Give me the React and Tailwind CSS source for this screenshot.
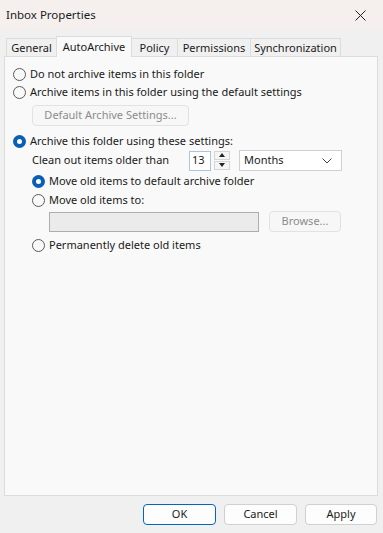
import React from "react";

function Radio({ checked, label, className = "" }) {
  return (
    <div className={"flex items-center h-[18px] " + className}>
      {checked ? (
        <span className="w-[13px] h-[13px] rounded-full bg-[#0a5fb4] flex items-center justify-center">
          <span className="w-[5px] h-[5px] rounded-full bg-white" />
        </span>
      ) : (
        <span className="w-[13px] h-[13px] rounded-full border border-[#5a5a5a] bg-[#f9f9f9]" />
      )}
      <span className="ml-[4px] text-[11px] text-[#1a1a1a]">{label}</span>
    </div>
  );
}

function Button({ children, className = "", disabled, primary }) {
  return (
    <div
      className={
        "h-[21px] flex items-center justify-center rounded-[4px] border text-[11px] " +
        (disabled
          ? "border-[#e2e2e2] bg-[#f7f7f7] text-[#8c8c8c] "
          : primary
          ? "border-[#0067c0] bg-[#fdfdfd] text-[#1a1a1a] "
          : "border-[#d0d0d0] bg-[#fdfdfd] text-[#1a1a1a] ") +
        className
      }
    >
      {children}
    </div>
  );
}

export default function App() {
  const tabs = [
    { name: "General", w: "w-[51px]" },
    { name: "AutoArchive", w: "w-[76px]", active: true },
    { name: "Policy", w: "w-[47px]" },
    { name: "Permissions", w: "w-[74px]" },
    { name: "Synchronization", w: "w-[91px]" },
  ];
  return (
    <div className="w-[383px] h-[533px] bg-[#f0f0f0] flex flex-col font-['Noto_Sans','Open_Sans',sans-serif] text-[11px] overflow-hidden">
      <div className="h-[30px] bg-[#f5efed] flex items-center justify-between pl-[6px] pr-[17px]">
        <span className="text-[11.5px] text-[#1a1a1a]">Inbox Properties</span>
        <svg width="11" height="11" viewBox="0 0 11 11">
          <path d="M0.5 0.5 L10.5 10.5 M10.5 0.5 L0.5 10.5" stroke="#222" strokeWidth="1" />
        </svg>
      </div>
      <div className="pt-[6px] px-[4px] flex flex-col">
        <div className="flex items-end pl-[2px] h-[20px]">
          {tabs.map((t) =>
            t.active ? (
              <div
                key={t.name}
                className={t.w + " h-[21px] -mb-[1px] -ml-[1px] z-10 bg-[#f9f9f9] border border-b-0 border-[#dcdcdc] flex items-start justify-center pt-[2px] text-[11px] text-[#1a1a1a]"}
              >
                {t.name}
              </div>
            ) : (
              <div
                key={t.name}
                className={t.w + " h-[18px] bg-[#f0f0f0] border border-b-0 border-[#dcdcdc] -ml-[1px] first:ml-0 flex items-center justify-center pt-[2px] text-[11px] text-[#1a1a1a]"}
              >
                {t.name}
              </div>
            )
          )}
        </div>
        <div className="w-[374px] h-[440px] bg-[#f9f9f9] border border-[#dcdcdc] pl-[8px] pt-[8px]">
          <Radio label="Do not archive items in this folder" />
          <Radio label="Archive items in this folder using the default settings" />
          <Button disabled className="w-[157px] ml-[19px] mt-[4px]">
            Default Archive Settings...
          </Button>
          <Radio checked label="Archive this folder using these settings:" className="mt-[6px]" />
          <div className="flex items-center h-[21px] ml-[19px]">
            <span className="w-[157px] text-[11px] text-[#1a1a1a]">Clean out items older than</span>
            <div className="w-[22px] h-[20px] border border-[#a9c4e6] bg-white flex items-center pl-[2px] text-[11px] text-[#1a1a1a]">
              13
            </div>
            <div className="ml-[3px] w-[16px] h-[20px] flex flex-col gap-[1px]">
              <div className="h-[9px] border border-[#d5d5d5] bg-[#f5f5f5] flex items-center justify-center">
                <svg width="6" height="4" viewBox="0 0 6 4"><path d="M0 4 L3 0 L6 4 Z" fill="#222" /></svg>
              </div>
              <div className="h-[9px] border border-[#d5d5d5] bg-[#f5f5f5] flex items-center justify-center">
                <svg width="6" height="4" viewBox="0 0 6 4"><path d="M0 0 L3 4 L6 0 Z" fill="#222" /></svg>
              </div>
            </div>
            <div className="ml-[9px] w-[103px] h-[21px] border border-[#d0d0d0] bg-white flex items-center justify-between pl-[4px] pr-[9px] text-[11px] text-[#1a1a1a]">
              <span>Months</span>
              <svg width="10" height="6" viewBox="0 0 10 6">
                <path d="M0.5 0.5 L5 5 L9.5 0.5" stroke="#444" strokeWidth="1" fill="none" />
              </svg>
            </div>
          </div>
          <div className="ml-[19px] mt-[1px]">
            <Radio checked label="Move old items to default archive folder" />
            <Radio label="Move old items to:" className="mt-[1px]" />
            <div className="flex items-center mt-[2px] ml-[17px]">
              <div className="w-[210px] h-[20px] border border-[#adadad] bg-[#ebebeb]" />
              <Button disabled className="w-[72px] ml-[10px]">
                Browse...
              </Button>
            </div>
            <Radio label="Permanently delete old items" className="mt-[4px]" />
          </div>
        </div>
      </div>
      <div className="flex justify-end gap-[8px] pr-[6px] mt-[8px]">
        <Button primary className="w-[73px]">OK</Button>
        <Button className="w-[73px]">Cancel</Button>
        <Button className="w-[72px]">Apply</Button>
      </div>
    </div>
  );
}
